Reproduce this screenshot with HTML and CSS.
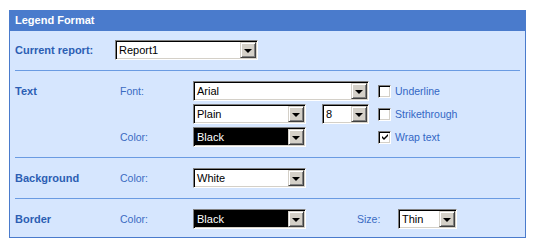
FILE: index.html
```html
<!DOCTYPE html>
<html>
<head>
<meta charset="utf-8">
<link rel="stylesheet" href="styles.css">
</head>
<body>
<div class="panel">
  <div class="panel-head">Legend Format</div>
  <div class="section sec-report">
    <div class="sec-label">Current report:</div>
    <div class="sel w-report"><span class="val">Report1</span><span class="btn"><i class="tri"></i></span></div>
  </div>
  <div class="section sec-grid">
    <div class="sec-label">Text</div>
    <div class="field-label">Font:</div>
    <div class="sel w-font"><span class="val">Arial</span><span class="btn"><i class="tri"></i></span></div>
    <label class="chk"><span class="box"></span>Underline</label>

    <div></div>
    <div></div>
    <div class="pair">
      <div class="sel w-mid"><span class="val">Plain</span><span class="btn"><i class="tri"></i></span></div>
      <div class="sel w-small"><span class="val">8</span><span class="btn"><i class="tri"></i></span></div>
    </div>
    <label class="chk"><span class="box"></span>Strikethrough</label>

    <div></div>
    <div class="field-label">Color:</div>
    <div><div class="sel w-mid dark"><span class="val">Black</span><span class="btn"><i class="tri"></i></span></div></div>
    <label class="chk"><span class="box"><svg width="9" height="9" viewBox="0 0 9 9"><path d="M1 3 L3 5 L7 1 L7 3 L3 7 L1 5 Z" fill="#000"/></svg></span>Wrap text</label>
  </div>
  <div class="section sec-grid">
    <div class="sec-label">Background</div>
    <div class="field-label">Color:</div>
    <div><div class="sel w-mid"><span class="val">White</span><span class="btn"><i class="tri"></i></span></div></div>
  </div>
  <div class="section sec-grid last">
    <div class="sec-label">Border</div>
    <div class="field-label">Color:</div>
    <div class="row-border">
      <div class="sel w-mid dark"><span class="val">Black</span><span class="btn"><i class="tri"></i></span></div>
      <span class="field-label size-label">Size:</span>
      <div class="sel w-thin"><span class="val">Thin</span><span class="btn"><i class="tri"></i></span></div>
    </div>
  </div>
</div>
</body>
</html>
```

FILE: styles.css
```css
html, body {
  margin: 0;
  padding: 0;
  background: #ffffff;
}
body {
  font-family: "Liberation Sans", Arial, sans-serif;
  font-size: 10px;
}
.panel {
  margin: 10px 0 0 9px;
  width: 517px;
  box-sizing: border-box;
  border: 1px solid #4a7bcc;
  border-top: 0;
  background: #d6e6fe;
}
.panel-head {
  height: 21px;
  background: #4a7bcc;
  color: #ffffff;
  font-weight: bold;
  font-size: 11px;
  line-height: 21px;
  margin: 0 -1px;
  padding-left: 6px;
}
.section {
  margin: 0 5px;
  padding: 9px 0 10px;
  border-top: 1px solid #6a9be2;
}
.panel-head + .section {
  border-top: 0;
}
.sec-report {
  display: flex;
  align-items: center;
}
.sec-report .sec-label {
  width: 100px;
}
.sec-grid {
  display: grid;
  grid-template-columns: 105px 73px 176px 1fr;
  row-gap: 3px;
  align-items: center;
  padding-top: 10px;
}
.sec-grid.last {
  padding-bottom: 8px;
}
.sec-label {
  color: #2c5eb3;
  font-weight: bold;
  font-size: 11px;
}
.field-label {
  color: #3a6bc2;
  font-size: 10.5px;
}
.sel {
  box-sizing: border-box;
  flex-shrink: 0;
  height: 20px;
  display: flex;
  border: 1px solid;
  border-color: #808080 #ffffff #ffffff #808080;
  box-shadow: inset 1px 1px 0 #000000, inset -1px -1px 0 #d4d0c8;
  background: #ffffff;
  padding: 1px;
}
.sel .val {
  flex: 1;
  font-size: 11px;
  line-height: 16px;
  padding-left: 2px;
  color: #000000;
  white-space: nowrap;
  overflow: hidden;
}
.sel.dark .val {
  background: #000000;
  color: #ffffff;
}
.sel .btn {
  width: 16px;
  box-sizing: border-box;
  background: #d4d0c8;
  border: 1px solid;
  border-color: #d4d0c8 #404040 #404040 #d4d0c8;
  box-shadow: inset 1px 1px 0 #ffffff, inset -1px -1px 0 #808080;
  display: flex;
  align-items: center;
  justify-content: center;
}
.tri {
  display: block;
  width: 0;
  height: 0;
  border-left: 4px solid transparent;
  border-right: 4px solid transparent;
  border-top: 4px solid #000000;
  margin-top: 1px;
}
.w-report { width: 143px; }
.w-font { width: 176px; }
.w-mid { width: 113px; }
.w-small { width: 47px; }
.w-thin { width: 59px; }
.pair {
  display: flex;
  justify-content: space-between;
}
.chk {
  display: flex;
  align-items: center;
  margin-left: 9px;
  color: #3366c4;
  font-size: 10.5px;
}
.box {
  box-sizing: border-box;
  width: 13px;
  height: 13px;
  margin-right: 4px;
  background: #ffffff;
  border: 1px solid;
  border-color: #808080 #ffffff #ffffff #808080;
  box-shadow: inset 1px 1px 0 #000000, inset -1px -1px 0 #d4d0c8;
  display: flex;
  align-items: center;
  justify-content: center;
}
.box svg {
  display: block;
  margin: 1px 0 0 1px;
}
.row-border {
  grid-column: 3 / -1;
  display: flex;
  align-items: center;
}
.size-label {
  margin-left: 51px;
  width: 41px;
}
```
